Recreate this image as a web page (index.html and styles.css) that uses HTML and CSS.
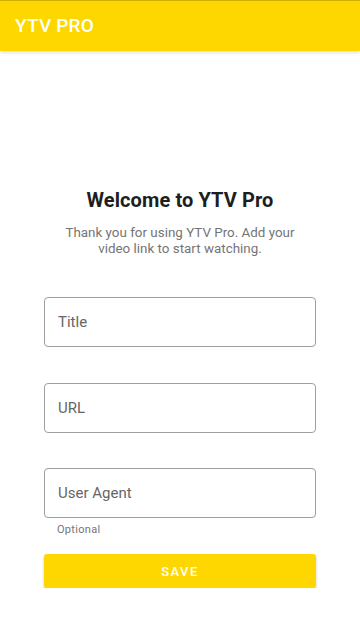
FILE: index.html
```html
<!DOCTYPE html>
<html>
<head>
<meta charset="utf-8">
<link rel="stylesheet" href="styles.css">
</head>
<body>
<header class="appbar"><span class="appbar-title">YTV PRO</span></header>
<main class="content">
  <h1 class="welcome">Welcome to YTV Pro</h1>
  <p class="intro">Thank you for using YTV Pro. Add your video link to start watching.</p>
  <form class="form">
    <div class="field"><span class="placeholder">Title</span></div>
    <div class="field"><span class="placeholder">URL</span></div>
    <div class="field-group">
      <div class="field"><span class="placeholder">User Agent</span></div>
      <span class="helper">Optional</span>
    </div>
    <button type="button" class="save">SAVE</button>
  </form>
</main>
</body>
</html>
```
FILE: styles.css
```css
html, body {
  margin: 0;
  padding: 0;
  background: #ffffff;
  font-family: Roboto, "Liberation Sans", sans-serif;
}
.appbar {
  height: 51px;
  background: #ffd700;
  border-top: 1px solid #cfae00;
  box-sizing: border-box;
  display: flex;
  align-items: center;
  padding: 0 15px;
  box-shadow: 0 1px 4px rgba(0,0,0,0.18);
  position: relative;
}
.appbar-title {
  color: #ffffff;
  font-size: 19px;
  font-weight: 500;
  letter-spacing: 0.2px;
  margin-top: -2px;
}
.content {
  padding: 135px 44px 0;
  display: flex;
  flex-direction: column;
  align-items: stretch;
}
.welcome {
  margin: 0;
  text-align: center;
  font-size: 20px;
  font-weight: 700;
  color: #1e1e1e;
  line-height: 28px;
  letter-spacing: 0.1px;
}
.intro {
  margin: 11px 18px 0;
  text-align: center;
  font-size: 13.4px;
  line-height: 16px;
  color: #757575;
}
.form {
  margin-top: 40px;
  display: flex;
  flex-direction: column;
}
.field {
  height: 50px;
  box-sizing: border-box;
  border: 1px solid #9e9e9e;
  border-radius: 4px;
  display: flex;
  align-items: center;
  padding: 0 13px;
  margin-bottom: 35.5px;
}
.placeholder {
  font-size: 15px;
  color: #666666;
}
.field-group .field {
  margin-bottom: 0;
}
.field-group {
  display: flex;
  flex-direction: column;
}
.helper {
  font-size: 11px;
  color: #757575;
  padding-left: 13px;
  margin-top: 5px;
  letter-spacing: 0.3px;
}
.save {
  margin-top: 18px;
  height: 34px;
  border: none;
  border-radius: 3px;
  background: #ffd700;
  color: #ffffff;
  font-family: Roboto, "Liberation Sans", sans-serif;
  font-size: 13px;
  font-weight: 500;
  letter-spacing: 1.4px;
  box-shadow: 0 2px 3px rgba(0,0,0,0.2);
}
```
